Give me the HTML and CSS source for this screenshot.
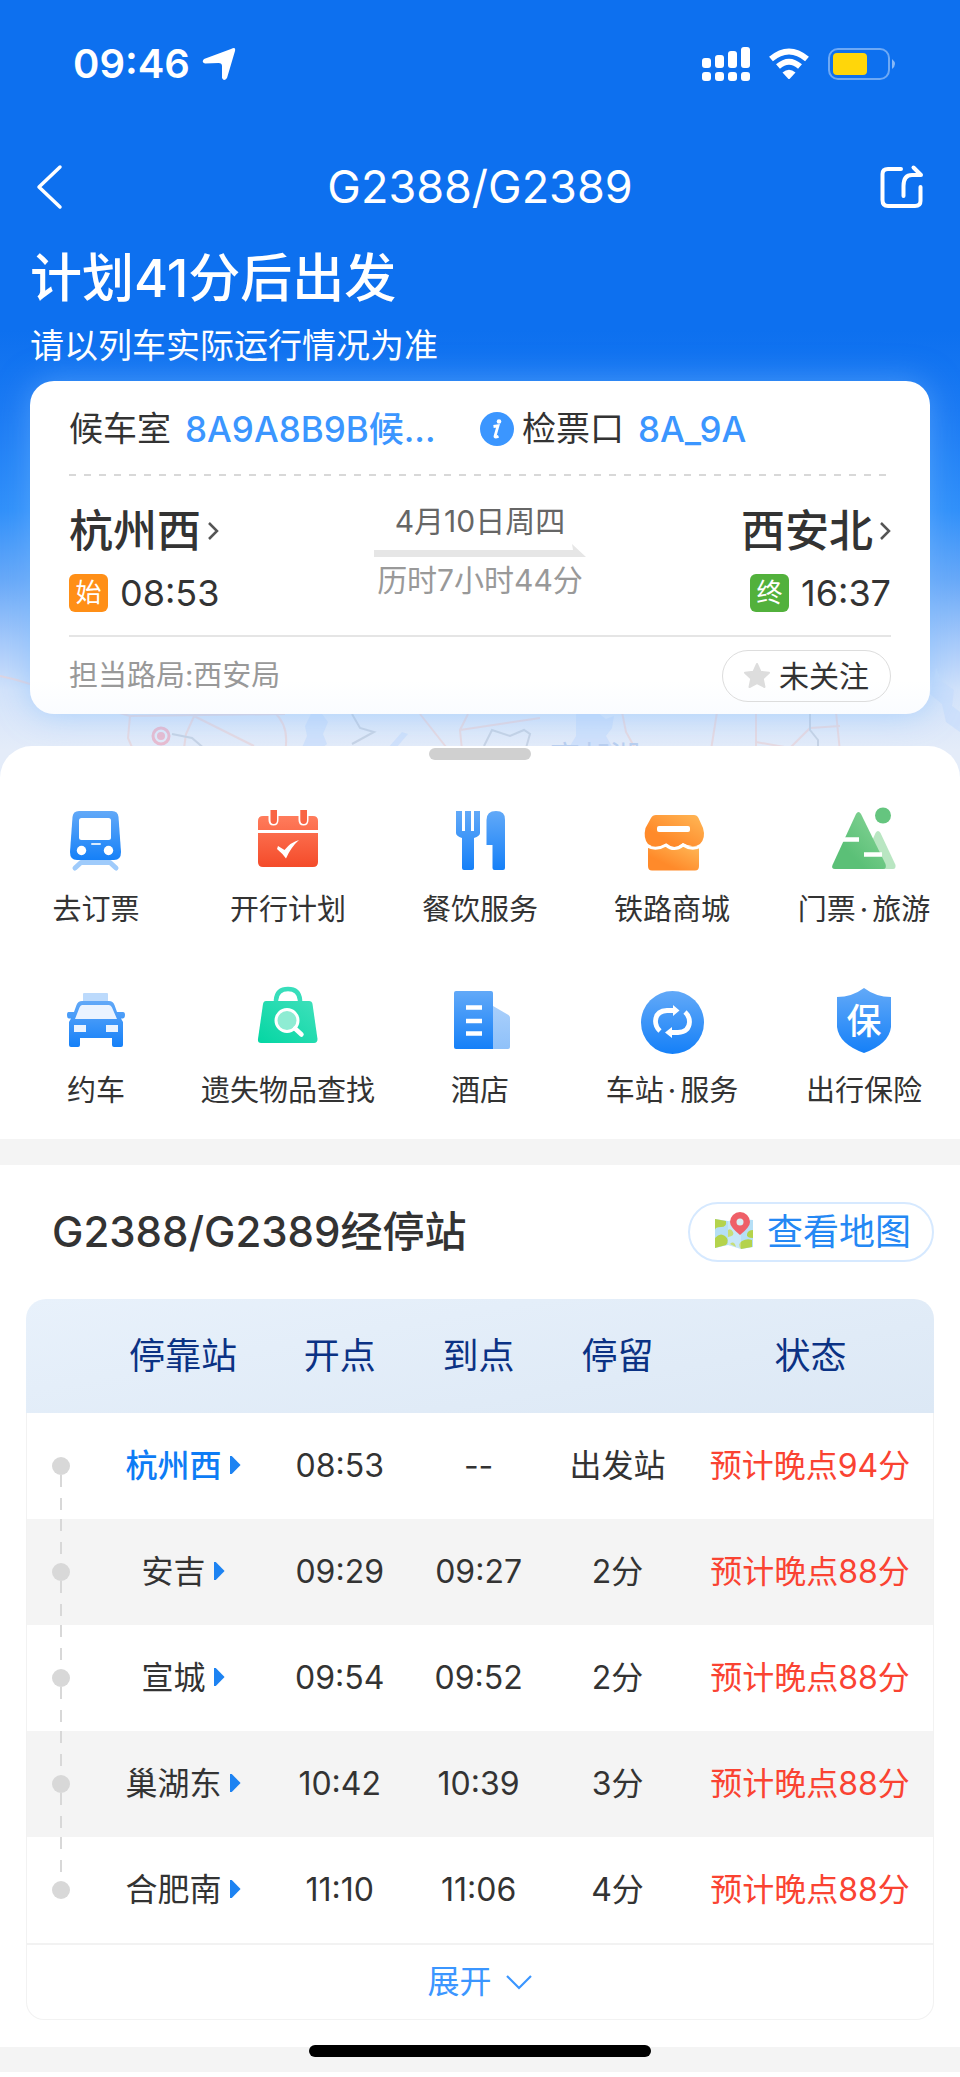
FILE: index.html
```html
<!DOCTYPE html>
<html lang="zh-CN">
<head>
<meta charset="utf-8">
<meta name="viewport" content="width=device-width, initial-scale=1">
<title>G2388/G2389</title>
<link rel="stylesheet" href="styles.css">
</head>
<body>
<svg class="defs" width="0" height="0" aria-hidden="true">
  <defs>
    <linearGradient id="blue" x1="0" y1="0" x2="0" y2="1"><stop offset="0" stop-color="#62a9f8"/><stop offset="1" stop-color="#1580f8"/></linearGradient>
    <linearGradient id="pale" x1="0" y1="0" x2="0" y2="1"><stop offset="0" stop-color="#a9cffb"/><stop offset="1" stop-color="#8fc1f9"/></linearGradient>
    <linearGradient id="red" x1="0" y1="0" x2="0" y2="1"><stop offset="0" stop-color="#ff7c5c"/><stop offset="1" stop-color="#f44b2a"/></linearGradient>
    <linearGradient id="orange" x1="0" y1="1" x2="1" y2="0"><stop offset=".3" stop-color="#ff8a2a"/><stop offset="1" stop-color="#ffb857"/></linearGradient>
    <linearGradient id="green" x1="0" y1="1" x2="1" y2="0"><stop offset=".3" stop-color="#5bc077"/><stop offset="1" stop-color="#8bd69a"/></linearGradient>
    <linearGradient id="mint" x1="0" y1="1" x2="1" y2="0"><stop offset="0" stop-color="#04d6a3"/><stop offset="1" stop-color="#3fe0bb"/></linearGradient>
  </defs>
</svg>

<header class="hero">
  <svg class="hero-map" viewBox="0 0 960 110" preserveAspectRatio="xMidYMax slice" aria-hidden="true">
    <g fill="#c9defc">
      <path d="M312 44l10 2 6 8-5 12 4 10-10 8-16-2 6-14-2-10z"/>
      <path d="M576 45l22 0 8 6 8-3-2 12-6 8 8 14-4 6-34 0-6-10 6-10z"/>
      <path d="M936 0l6 14 12 8-2 16 8 6v20l-14-10-4-18-12-10z"/>
      <path d="M374 80h14l14-16 6 2-12 14-12 3h-10z"/>
    </g>
    <g fill="none" stroke="#e9d3d8" stroke-width="2">
      <path d="M0 8Q30 14 60 28L130 48 285 46M130 48l-2 22 6 14M196 44l-10 22-2 14M194 48l60 30M274 44q16 14 11 40M420 46l30 38M468 46l-8 16 2 20M460 62l80-12M622 44l4 20 10 18M717 44l-6 38M756 44v40M836 44l4 40M756 74l34 6 20-20 30-2"/>
    </g>
    <g fill="none" stroke="#bccadd" stroke-width="2">
      <path d="M172 66l20 4 14 12 30 2M352 46l8 14 14 4-22 12M484 78l8-16 18 6 14-6 6 4-4 14 8 2M810 46v16l8 10v12"/>
    </g>
    <circle cx="161" cy="68" r="8" fill="none" stroke="#eba9bf" stroke-width="3"/>
    <circle cx="161" cy="68" r="4" fill="#eba9bf"/>
    <text class="map-label" x="550" y="99">高邮湖</text>
  </svg>

  <div class="statusbar">
    <div class="clock">
      <span>09:46</span>
      <svg width="34" height="34" viewBox="0 0 34 34" aria-hidden="true"><path d="M29 2Q34-1 33 4L25 31Q22 35 20 31V19Q20 16 16.500 16L3 16.500Q-1 15 2 12z" fill="#fff"/></svg>
    </div>
    <div class="indicators">
      <svg width="48" height="35" viewBox="0 0 48 35" fill="#fff" aria-hidden="true">
        <rect x="0" y="11" width="9" height="10" rx="3"/><rect x="13" y="8" width="9" height="13" rx="3"/><rect x="26" y="4" width="9" height="17" rx="3"/><rect x="39" y="0" width="9" height="21" rx="3"/>
        <rect x="0" y="25" width="9" height="9" rx="3"/><rect x="13" y="25" width="9" height="9" rx="3"/><rect x="26" y="25" width="9" height="9" rx="3"/><rect x="39" y="25" width="9" height="9" rx="3"/>
      </svg>
      <svg width="42" height="32" viewBox="0 0 42 32" aria-hidden="true">
        <path d="M3 11Q21-4 39 11" fill="none" stroke="#fff" stroke-width="6"/>
        <path d="M10 18.500Q21 9 32 18.500" fill="none" stroke="#fff" stroke-width="6"/>
        <path d="M14.500 24.500Q21 19 27.500 24.500L22 30.500Q21 31.500 20 30.500z" fill="#fff"/>
      </svg>
      <svg width="68" height="33" viewBox="0 0 68 33" aria-hidden="true">
        <rect x="1" y="1" width="60" height="30" rx="9" fill="none" stroke="#fff" stroke-opacity=".4" stroke-width="2"/>
        <rect x="5" y="5" width="34" height="22" rx="4" fill="#ffd60a"/>
        <path d="M64 11q6 5 0 10z" fill="#fff" fill-opacity=".5"/>
      </svg>
    </div>
  </div>

  <nav class="navbar">
    <button class="icon-button" type="button" aria-label="返回"><svg width="26" height="44" viewBox="0 0 26 44"><path d="M24 2L3 22l21 20" fill="none" stroke="#fff" stroke-width="3.500" stroke-linecap="round" stroke-linejoin="round"/></svg></button>
    <h1>G2388/G2389</h1>
    <button class="icon-button share" type="button" aria-label="分享"><svg width="44" height="44" viewBox="0 0 44 44" fill="none" stroke="#fff" stroke-width="4" stroke-linecap="round" stroke-linejoin="round"><path d="M21 4H8Q2.500 4 2.500 9V35Q2.500 41 8 41H35Q40.500 41 40.500 36V22"/><path d="M23.500 31V21Q23.500 10 32 10H41L33.500 2.500"/></svg></button>
  </nav>

  <h2 class="headline">计划41分后出发</h2>
  <p class="subline">请以列车实际运行情况为准</p>

  <section class="trip">
    <div class="trip-gates">
      <p>候车室<b>8A9A8B9B候...</b></p>
      <p><svg class="info" width="34" height="34" viewBox="0 0 34 34" aria-hidden="true"><circle cx="17" cy="17" r="17" fill="#3b96ff"/><circle cx="19" cy="9.500" r="2.300" fill="#fff"/><path d="M13.500 14.500l4.500-.7-3 10.500q-.3 1.800 3.500 0" fill="none" stroke="#fff" stroke-width="2.800"/></svg>检票口<b>8A_9A</b></p>
    </div>
    <div class="trip-route">
      <div class="stop">
        <a class="stop-name" href="#stops">杭州西<svg width="12" height="20" viewBox="0 0 12 20"><path d="M2 2l8 8-8 8" fill="none" stroke="#555" stroke-width="2.500"/></svg></a>
        <div class="stop-time"><span class="badge start">始</span>08:53</div>
      </div>
      <div class="journey">
        <span>4月10日周四</span>
        <svg width="212" height="13" viewBox="0 0 212 13" aria-hidden="true"><path d="M0 6H199L198 0 212 13H0z" fill="#e6e6e6"/></svg>
        <span class="duration">历时7小时44分</span>
      </div>
      <div class="stop end">
        <a class="stop-name" href="#stops">西安北<svg width="12" height="20" viewBox="0 0 12 20"><path d="M2 2l8 8-8 8" fill="none" stroke="#555" stroke-width="2.500"/></svg></a>
        <div class="stop-time"><span class="badge final">终</span>16:37</div>
      </div>
    </div>
    <div class="trip-foot">
      <span>担当路局:西安局</span>
      <button class="follow" type="button"><svg width="28" height="27" viewBox="0 0 28 27" aria-hidden="true"><path d="M14 2l3.600 7.800 8.400 1-6.200 5.800 1.700 8.400L14 21l-7.500 4 1.700-8.400L2 10.800l8.400-1z" fill="#ddd" stroke="#ddd" stroke-width="2" stroke-linejoin="round"/></svg>未关注</button>
    </div>
  </section>
</header>

<main class="sheet">
  <div class="handle"></div>
  <nav class="services">
    <a href="#"><svg viewBox="0 0 64 64">
      <path d="M11 60L17 54.500H46L52 60" fill="none" stroke="#9fcbfb" stroke-width="5" stroke-linecap="round" stroke-linejoin="round"/>
      <path d="M15 3H48Q54 3 54.500 9L57 44Q57 52 50 52H13Q6 52 6 44L8.500 9Q9 3 15 3z" fill="url(#blue)"/>
      <rect x="15" y="10" width="32" height="22" rx="2.500" fill="#fff"/><rect x="27" y="35" width="10" height="2" rx="1" fill="#d9ebff"/>
      <circle cx="17.500" cy="42.500" r="4.700" fill="#fff"/><circle cx="44.500" cy="42.500" r="4.700" fill="#fff"/></svg>去订票</a>
    <a href="#"><svg viewBox="0 0 64 64">
      <path d="M7 8H57Q62 8 62 13V54Q62 59 57 59H7Q2 59 2 54V13Q2 8 7 8z" fill="url(#red)"/>
      <path d="M2 23.500H62" stroke="#fff" stroke-width="3"/>
      <path d="M12.500 0V12Q12.500 17.500 17.500 17.500T22.500 12V0zM42.500 0V12Q42.500 17.500 47.500 17.500T52.500 12V0z" fill="#fff"/>
      <path d="M14.500 2H21V12Q21 16 17.700 16T14.500 12zM44.300 2H51V12Q51 16 47.700 16T44.300 12z" fill="#f96444"/>
      <path d="M22 38L28.500 42Q35 34 43 32Q35 39 30 50.500Q27 46 21 41z" fill="#fff"/></svg>开行计划</a>
    <a href="#"><svg viewBox="0 0 64 64" fill="url(#blue)">
      <path d="M8 3H14V23H17V3H23V23H26V3H32V25Q32 28 26 30V60Q26 62 24 62H16Q14 62 14 60V30Q8 28 8 25z"/>
      <path d="M38.500 37V12Q38.500 3 48 3T57 12V60Q57 62 55 62H46.500Q44.500 62 44.500 60V37z"/></svg>餐饮服务</a>
    <a href="#"><svg viewBox="0 0 64 64">
      <path d="M8 38H59V58Q59 62.500 55 62.500H12Q8 62.500 8 58z" fill="url(#orange)"/>
      <path d="M16 7H54Q57 7 58.500 10L63 20Q66 30 60 36Q53 41 43 35Q34 43 26 36Q16 42 8 36Q3 30 5.500 20L11 10Q12.500 7 16 7z" fill="url(#orange)"/>
      <path d="M7 38Q16 43 26 37Q34 44 43 37Q52 43 61 38" fill="none" stroke="#fff" stroke-width="3"/>
      <rect x="17" y="18" width="33" height="6" rx="2" fill="#fff"/></svg>铁路商城</a>
    <a href="#"><svg viewBox="0 0 64 64">
      <path d="M28 60L43.500 25Q46 21 48.500 25L63.500 57Q64 61 61 61H28z" fill="#b9e6c2"/>
      <path d="M24 6Q26.500 2 29 6L53.500 56Q55 61 51 61H3Q-1 61 .5 57z" fill="url(#green)"/>
      <path d="M10 31.500H27M32 46.500H50" stroke="#fff" stroke-width="4.500"/><circle cx="51" cy="7.500" r="8" fill="#65c57f"/></svg><span>门票<i class="dot">·</i>旅游</span></a>
    <a href="#"><svg viewBox="0 0 64 64">
      <rect x="19" y="4" width="25" height="9" rx="1" fill="#bcdafc"/>
      <path d="M18 12H45Q49 12 50.500 16L53 23H59Q61 23 61 26T59 29.500H57L59 33V56Q59 58 57 58H50Q48 58 48 56V49H16V56Q16 58 14 58H7Q5 58 5 56V33L7 29.500H5Q3 29.500 3 26T5 23H10L12.500 16Q14 12 18 12z" fill="url(#blue)"/>
      <path d="M18 16H45Q47 16 48 18.500L53 30H11L15.500 18.500Q16.500 16 18 16z" fill="#eaf3ff"/>
      <rect x="10" y="36" width="12" height="7" fill="#eaf3ff"/><rect x="42" y="36" width="12" height="7" fill="#eaf3ff"/></svg>约车</a>
    <a href="#"><svg viewBox="0 0 64 64">
      <path d="M20 14V11Q21 0 32 0T44 11V14" fill="none" stroke="#37debb" stroke-width="4.500"/>
      <path d="M10 12H53Q56 12 56.500 15L61.500 50Q61.500 54 58 54H5Q1.500 54 2 50L7 15Q7.500 12 10 12z" fill="url(#mint)"/>
      <circle cx="31" cy="31.500" r="11" fill="#8eecd3" stroke="#fff" stroke-width="3"/><path d="M39 39.500L45.500 45.500" stroke="#fff" stroke-width="4.500" stroke-linecap="round"/></svg>遗失物品查找</a>
    <a href="#"><svg viewBox="0 0 64 64">
      <path d="M45 17L60.500 26Q62 27 62 29V58Q62 60 60 60H45z" fill="url(#pale)"/>
      <path d="M8 2H43Q45 2 45 4V60H8Q6 60 6 58V4Q6 2 8 2z" fill="url(#blue)"/>
      <path d="M18 18.500H34M18 32H34M18 44.500H34" stroke="#fff" stroke-width="4.500"/></svg>酒店</a>
    <a href="#"><svg viewBox="0 0 64 64">
      <circle cx="32.500" cy="33.500" r="31.500" fill="url(#blue)"/>
      <g fill="none" stroke="#fff" stroke-width="4.800"><path d="M20 42Q15.500 38 15.500 32Q16 22 27 21.500H34"/><path d="M45 23Q49.500 27 49.500 33Q49 43 38 43.500H31"/></g>
      <path d="M33 16L39.500 21.500 33 27zM32 38L25 43.500 32 49z" fill="#fff"/></svg><span>车站<i class="dot">·</i>服务</span></a>
    <a href="#"><svg viewBox="0 0 64 64">
      <path d="M32-1Q44 8 59 8V38Q57 55 32 64Q7 55 5 38V8Q20 8 32-1z" fill="url(#blue)"/>
      <text class="shield-text" x="32" y="45" text-anchor="middle">保</text></svg>出行保险</a>
  </nav>

  <section class="stops" id="stops">
    <div class="stops-head">
      <h2>G2388/G2389经停站</h2>
      <button class="map-button" type="button">
        <svg width="40" height="44" viewBox="0 0 40 44" aria-hidden="true">
          <path d="M1 9L14 11 27 9 39 10V37L27 39 14 35 1 38z" fill="#b5dff6"/>
          <path d="M1 9L12 11Q13 17 7 17T1 20zM1 28Q6 22 11 26T12 35L1 38zM14 20Q17 18 19 22T14 27zM39 20Q34 20 33 24T39 28zM27 39Q23 34 28 31T38 30V37zM16 34Q20 30 22 37z" fill="#b4d34c"/>
          <path d="M14 11V35L27 39V9z" fill="#fff" opacity=".25"/>
          <path d="M26 25Q16 17 16 12A10 10 0 0 1 36 12Q36 17 26 25z" fill="#ef5f68"/><circle cx="26" cy="12" r="3.500" fill="#d8eef5"/>
        </svg>查看地图</button>
    </div>

    <table class="timetable">
      <colgroup><col class="c-rail"><col class="c-name"><col class="c-time"><col class="c-time"><col class="c-time"><col class="c-state"></colgroup>
      <thead><tr><th></th><th>停靠站</th><th>开点</th><th>到点</th><th>停留</th><th>状态</th></tr></thead>
      <tbody>
        <tr><td class="rail"><i></i></td><td class="current">杭州西<span class="tri"></span></td><td>08:53</td><td>--</td><td>出发站</td><td class="late">预计晚点94分</td></tr>
        <tr><td class="rail"><i></i></td><td>安吉<span class="tri"></span></td><td>09:29</td><td>09:27</td><td>2分</td><td class="late">预计晚点88分</td></tr>
        <tr><td class="rail"><i></i></td><td>宣城<span class="tri"></span></td><td>09:54</td><td>09:52</td><td>2分</td><td class="late">预计晚点88分</td></tr>
        <tr><td class="rail"><i></i></td><td>巢湖东<span class="tri"></span></td><td>10:42</td><td>10:39</td><td>3分</td><td class="late">预计晚点88分</td></tr>
        <tr><td class="rail"><i></i></td><td>合肥南<span class="tri"></span></td><td>11:10</td><td>11:06</td><td>4分</td><td class="late">预计晚点88分</td></tr>
      </tbody>
    </table>
    <button class="expand" type="button">展开<svg width="28" height="18" viewBox="0 0 28 18" aria-hidden="true"><path d="M2 3l12 12L26 3" fill="none" stroke="#3b96ff" stroke-width="2.200"/></svg></button>
  </section>
  <div class="band"></div>
</main>
<div class="home-indicator"></div>
</body>
</html>
```

FILE: styles.css
```css
* { box-sizing: border-box; }

body {
  margin: 0;
  position: relative;
  background: #fff;
  color: #333;
  font-family: "Inter", "Noto Sans CJK SC", sans-serif;
  font-size: 29px;
  line-height: 36px;
}

h1, h2, p { margin: 0; font-weight: 400; }
a { color: inherit; text-decoration: none; }
button { padding: 0; border: 0; background: none; color: inherit; font: inherit; }
svg { display: block; flex: none; overflow: visible; }
.defs { position: absolute; }

/* Hero */
.hero {
  position: relative;
  padding: 0 30px 64px;
  color: #fff;
  background: linear-gradient(#0d70ef 0, #0d70ef 330px, #1b7af3 410px, #3090fa 510px, #68a9f8 580px, #a5c9fa 640px, #d3e3fa 690px, #e4ecf9 750px);
}
.hero-map {
  position: absolute;
  left: 0;
  bottom: 0;
  width: 100%;
  height: 110px;
  overflow: hidden;
  opacity: .7;
}
.map-label { font-size: 30px; fill: #a9c4ec; }

.statusbar {
  display: flex;
  justify-content: space-between;
  align-items: center;
  height: 128px;
  padding: 0 34px 0 43px;
}
.clock, .indicators { display: flex; align-items: center; }
.clock { gap: 12px; font-size: 40px; font-weight: 600; }
.indicators { gap: 18px; }

.navbar {
  display: grid;
  grid-template-columns: 1fr auto 1fr;
  align-items: center;
  height: 118px;
  padding: 0 6px;
}
.navbar h1 { font-size: 45px; line-height: 60px; }
.icon-button { justify-self: start; }
.navbar .share { justify-self: end; }

.headline { font-size: 52px; line-height: 66px; font-weight: 500; }
.subline { padding: 12px 0 13px; font-size: 34px; line-height: 44px; }

/* Trip card */
.trip {
  position: relative;
  padding: 0 39px;
  border-radius: 24px;
  color: #333;
  background: linear-gradient(#fff 90%, #fafcff);
  box-shadow: 0 0 32px rgba(120, 185, 255, .5);
}
.trip-gates {
  display: grid;
  grid-template-columns: 1fr 1fr;
  align-items: center;
  height: 95px;
  font-size: 34px;
  background: repeating-linear-gradient(90deg, #d8d8d8 0 7px, transparent 7px 15px) bottom / 100% 2px no-repeat;
}
.trip-gates p { display: flex; align-items: center; white-space: nowrap; }
.trip-gates b { margin-left: 14px; color: #3b96ff; font-size: 35px; font-weight: 500; }
.info { margin-right: 8px; }
.trip-route {
  display: grid;
  grid-template-columns: 1fr auto 1fr;
  padding: 25px 0 23px;
  border-bottom: 2px solid #e5e5e5;
}
.stop { display: flex; flex-direction: column; align-items: flex-start; gap: 13px; }
.stop.end { align-items: flex-end; }
.stop-name { display: flex; align-items: center; gap: 6px; font-size: 44px; line-height: 60px; font-weight: 500; }
.stop-time { display: flex; align-items: center; gap: 12px; font-size: 36px; line-height: 38px; }
.badge { width: 39px; border-radius: 6px; color: #fff; font-size: 26px; line-height: 38px; text-align: center; }
.badge.start { background: #ff8f17; }
.badge.final { background: #52b13c; }
.journey { display: flex; flex-direction: column; align-items: center; gap: 3px; color: #666; font-size: 30px; line-height: 40px; }
.duration { color: #999; }
.trip-foot { display: flex; justify-content: space-between; align-items: center; height: 77px; color: #999; }
.follow {
  display: flex;
  align-items: center;
  gap: 8px;
  padding: 0 21px 0 20px;
  border: 1px solid #ddd;
  border-radius: 26px;
  color: #333;
  font-size: 30px;
  line-height: 50px;
}

/* Bottom sheet */
.sheet {
  position: relative;
  margin-top: -32px;
  padding-top: 2px;
  border-radius: 32px 32px 0 0;
  background: #fff;
}
.handle { width: 102px; height: 12px; margin: 0 auto; border-radius: 6px; background: #d0d0d0; }
.services {
  display: grid;
  grid-template-columns: repeat(5, 1fr);
  row-gap: 61px;
  padding: 48px 0 30px;
}
.services a { display: flex; flex-direction: column; align-items: center; gap: 20px; white-space: nowrap; }
.services svg { width: 64px; height: 64px; }
.dot { padding: 0 4px; font-style: normal; }
.shield-text { font-size: 35px; font-weight: 500; fill: #fff; }

/* Stops */
.stops { padding: 0 26px 27px; border-top: 26px solid #f4f4f4; }
.stops-head { display: flex; justify-content: space-between; align-items: center; height: 134px; padding-left: 26px; }
.stops-head h2 { font-size: 42px; line-height: 56px; font-weight: 500; }
.map-button {
  display: flex;
  align-items: center;
  gap: 13px;
  padding: 0 21px 0 24px;
  border: 2px solid #d6e9ff;
  border-radius: 30px;
  color: #2488f4;
  font-size: 36px;
  line-height: 56px;
}
.timetable {
  width: 100%;
  table-layout: fixed;
  border-spacing: 0;
  border-radius: 20px 20px 0 0;
  overflow: hidden;
  font-size: 32px;
  text-align: center;
  white-space: nowrap;
}
.c-rail { width: 7.7%; }
.c-name { width: 19.2%; }
.c-time { width: 15.3%; }
th, td { padding: 0; }
thead tr { background: linear-gradient(170deg, #e8f1fb, #dce8f5); }
th { height: 114px; color: #0b3284; font-size: 36px; font-weight: 400; }
td { height: 106px; }
td:first-child { border-left: 1px solid #f2f2f2; }
td:last-child { border-right: 1px solid #f2f2f2; }
tbody tr:nth-child(even) { background: #f4f4f4; }
.current { color: #0d7cf5; font-weight: 500; }
.late { color: #fa4332; }
.tri {
  display: inline-block;
  width: 11px;
  height: 18px;
  margin-left: 8px;
  background: #1d83f2;
  clip-path: polygon(0 0, 20% 0, 100% 50%, 20% 100%, 0 100%);
  vertical-align: 3px;
}
.rail {
  --dash: repeating-linear-gradient(#d8d8d8 0 12px, transparent 12px 23px);
  background: var(--dash) center top / 2px 44px no-repeat, var(--dash) center bottom / 2px 44px no-repeat;
}
tr:first-child .rail { background: var(--dash) center bottom / 2px 44px no-repeat; }
tr:last-child .rail { background: var(--dash) center top / 2px 44px no-repeat; }
.rail i { display: block; width: 18px; height: 18px; margin: 0 auto; border-radius: 50%; background: #d8d8d8; }
.expand {
  display: flex;
  justify-content: center;
  align-items: center;
  gap: 13px;
  width: 100%;
  height: 77px;
  border: 1px solid #f2f2f2;
  border-top: 2px solid #f2f2f2;
  border-radius: 0 0 18px 18px;
  color: #3b96ff;
  font-size: 32px;
}
.band { height: 25px; margin-bottom: 5px; background: #f4f4f4; }
.home-indicator {
  position: absolute;
  left: 50%;
  bottom: 20px;
  width: 342px;
  height: 12px;
  margin-left: -171px;
  border-radius: 6px;
  background: #000;
}
```
